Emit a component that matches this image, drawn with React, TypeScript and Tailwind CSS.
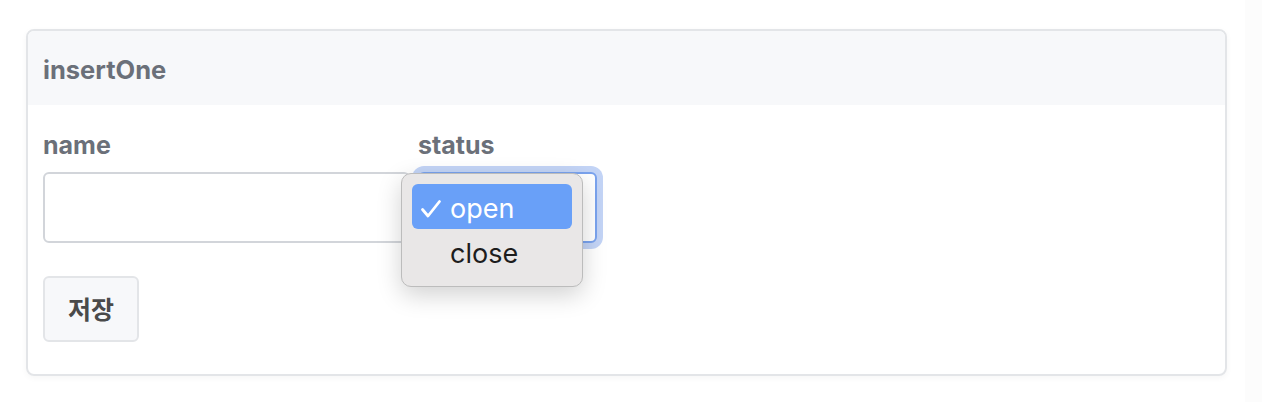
import React from "react";

export default function App() {
  return (
    <div
      className="flex h-[402px] w-[1262px] bg-white"
      style={{ fontFamily: "Inter, 'Noto Sans', 'Noto Sans CJK KR', sans-serif" }}
    >
      <div className="flex-1 pl-[26px] pt-[29px] pr-[18px]">
        <div className="flex h-[347px] flex-col overflow-visible rounded-[8px] border-2 border-[#e3e5e8] shadow-[0_2px_6px_rgba(0,0,0,0.04)]">
          <div className="flex h-[74px] items-center rounded-t-[6px] bg-[#f7f8fa] px-[15px] pt-[4px]">
            <span className="text-[25.5px] font-bold text-[#6b7079]">insertOne</span>
          </div>
          <div className="flex flex-col px-[15px] pt-[25px]">
            <div className="flex gap-[8px]">
              <div className="flex w-[367px] flex-col gap-[12px]">
                <label className="text-[25px] font-bold leading-[30px] text-[#6b7079]">name</label>
                <div className="h-[71px] rounded-[6px] border-2 border-[#d2d5da] bg-white" />
              </div>
              <div className="relative flex flex-col gap-[12px]">
                <label className="text-[25px] font-bold leading-[30px] text-[#6b7079]">status</label>
                <div className="h-[71px] w-[179px] rounded-[6px] border-2 border-[#7aa3ee] bg-white shadow-[0_0_0_6px_#c3d4f6]" />
                <div className="absolute left-[-17px] top-[43px] z-10 flex h-[114px] w-[182px] flex-col rounded-[10px] border border-[#bcbcbc] bg-[#e9e7e7] px-[10px] py-[10px] shadow-[0_8px_24px_rgba(0,0,0,0.18)]">
                  <div className="flex h-[45px] items-center rounded-[6px] bg-[#69a0f8] pl-[8px] pt-[5px] text-[27px] text-white">
                    <svg width="22" height="20" viewBox="0 0 22 20" className="mr-[8px] mt-[-1px]">
                      <path d="M2.5 10.5 L8 17 L19.5 2.5" fill="none" stroke="white" strokeWidth="2.8" strokeLinecap="round" strokeLinejoin="round" />
                    </svg>
                    <span>open</span>
                  </div>
                  <div className="flex h-[45px] items-center pl-[38px] pt-[5px] text-[27px] text-[#1d1d1d]">close</div>
                </div>
              </div>
            </div>
            <div className="pt-[33px]">
              <button className="flex h-[66px] w-[96px] items-center justify-center rounded-[6px] border-2 border-[#e3e5e8] bg-[#f7f8fa] pt-[3px] text-[25px] font-bold text-[#4a4a4a]">
                저장
              </button>
            </div>
          </div>
        </div>
      </div>
      <div className="w-[17px] bg-[#fcfcfc]" />
    </div>
  );
}
